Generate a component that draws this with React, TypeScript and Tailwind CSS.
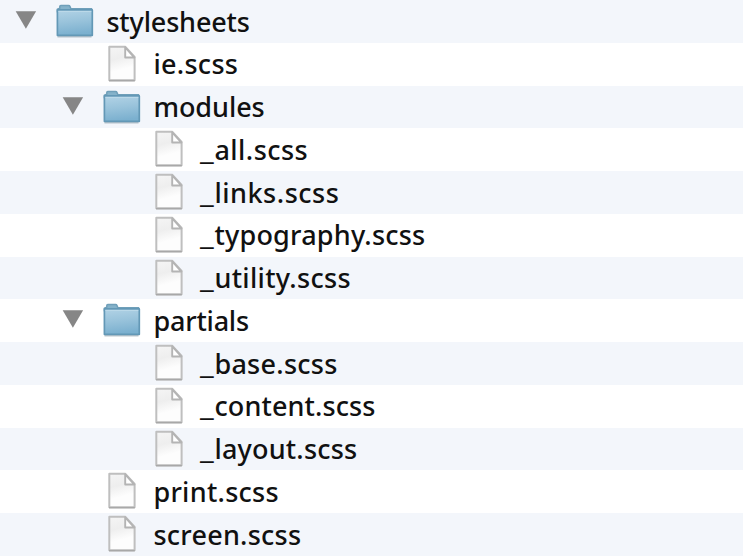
type Entry = { name: string; depth: number; folder?: boolean; tracking: string };

const entries: Entry[] = [
  { name: "stylesheets", depth: 0, folder: true, tracking: "tracking-[-0.15px]" },
  { name: "ie.scss", depth: 1, tracking: "tracking-[0.3px]" },
  { name: "modules", depth: 1, folder: true, tracking: "tracking-[-0.05px]" },
  { name: "_all.scss", depth: 2, tracking: "tracking-[0.48px]" },
  { name: "_links.scss", depth: 2, tracking: "tracking-[0.53px]" },
  { name: "_typography.scss", depth: 2, tracking: "tracking-[0.22px]" },
  { name: "_utility.scss", depth: 2, tracking: "tracking-[0.33px]" },
  { name: "partials", depth: 1, folder: true, tracking: "tracking-[-0.2px]" },
  { name: "_base.scss", depth: 2, tracking: "tracking-[0.27px]" },
  { name: "_content.scss", depth: 2, tracking: "tracking-[0.12px]" },
  { name: "_layout.scss", depth: 2, tracking: "tracking-[0.2px]" },
  { name: "print.scss", depth: 1, tracking: "tracking-[0.28px]" },
  { name: "screen.scss", depth: 1, tracking: "tracking-[0.25px]" },
];

const indents = ["pl-[12px]", "pl-[59px]", "pl-[106px]"];

function Disclosure() {
  return (
    <svg className="h-full w-full" viewBox="0 0 28 42.75">
      <path d="M3.7 11.3H24.1L13.9 28.8Z" fill="#868686" />
    </svg>
  );
}

function FolderIcon() {
  return (
    <svg className="h-full w-full" viewBox="0 0 44 42.75">
      <defs>
        <linearGradient id="folderFace" x1="0" y1="0" x2="0.15" y2="1">
          <stop offset="0" stopColor="#b2d3e6" />
          <stop offset="0.5" stopColor="#99c3db" />
          <stop offset="1" stopColor="#7bb0cf" />
        </linearGradient>
      </defs>
      <path d="M5.5 36.7H39.5" stroke="#7b909b" strokeOpacity=".5" strokeWidth="1.5" />
      <path
        d="M5.4 12V9.2L7.8 8.2V6.4Q7.8 5.5 8.8 5.5H16.6Q17.5 5.5 17.9 6.4L18.9 8.8H39.6V12Z"
        fill="#84b2ca"
        stroke="#6f9fb9"
        strokeWidth="1.5"
        strokeLinejoin="round"
      />
      <path d="M5.4 9.9H40.3V35.3H5.4Z" fill="url(#folderFace)" stroke="#6398b6" strokeWidth="1.7" strokeLinejoin="round" />
      <path d="M6.4 11.4H39.3" stroke="#bddaea" strokeWidth="1" />
    </svg>
  );
}

function FileIcon() {
  return (
    <svg className="h-full w-full" viewBox="0 0 44 42.75">
      <defs>
        <linearGradient id="paper" x1="0" y1="0" x2="0.2" y2="1">
          <stop offset="0" stopColor="#f5f5f5" />
          <stop offset="0.4" stopColor="#eeeeee" />
          <stop offset="0.75" stopColor="#fdfdfd" />
        </linearGradient>
      </defs>
      <path d="M10.3 3.8H26.4L35.6 14V37.3H10.3Z" fill="url(#paper)" stroke="#bfbfbf" strokeWidth="2" strokeLinejoin="round" />
      <path d="M26.2 4.3V14.5H35.4Z" fill="#fff" stroke="#b4b4b4" strokeWidth="1.9" strokeLinejoin="round" />
      <path d="M10 37.7H35.8" stroke="#a8a8a8" strokeWidth="1.5" />
    </svg>
  );
}

function Label({ name, tracking }: { name: string; tracking: string }) {
  const partial = name.startsWith("_");
  return (
    <span
      className={`ml-[10.4px] whitespace-pre pt-[1px] text-[27px] leading-[42.75px] font-medium text-[#111] ${tracking}`}
    >
      {partial && <span className="inline-block w-[14px] origin-left scale-x-[1.17]">_</span>}
      {partial ? name.slice(1) : name}
    </span>
  );
}

function Row({ entry, shaded }: { entry: Entry; shaded: boolean }) {
  return (
    <li
      className={`flex h-[42.75px] items-center ${indents[entry.depth]} ${shaded ? "bg-[#f3f6fb]" : "bg-white"}`}
    >
      <span className="h-full w-[28px] shrink-0">{entry.folder && <Disclosure />}</span>
      <span className="ml-[12px] h-full w-[44px] shrink-0">{entry.folder ? <FolderIcon /> : <FileIcon />}</span>
      <Label name={entry.name} tracking={entry.tracking} />
    </li>
  );
}

export default function App() {
  return (
    <main className="h-[558px] w-[743px] overflow-hidden bg-white font-['Noto_Sans','Open_Sans',sans-serif]">
      <ul>
        {entries.map((entry, i) => (
          <Row key={entry.name} entry={entry} shaded={i % 2 === 0} />
        ))}
      </ul>
    </main>
  );
}
